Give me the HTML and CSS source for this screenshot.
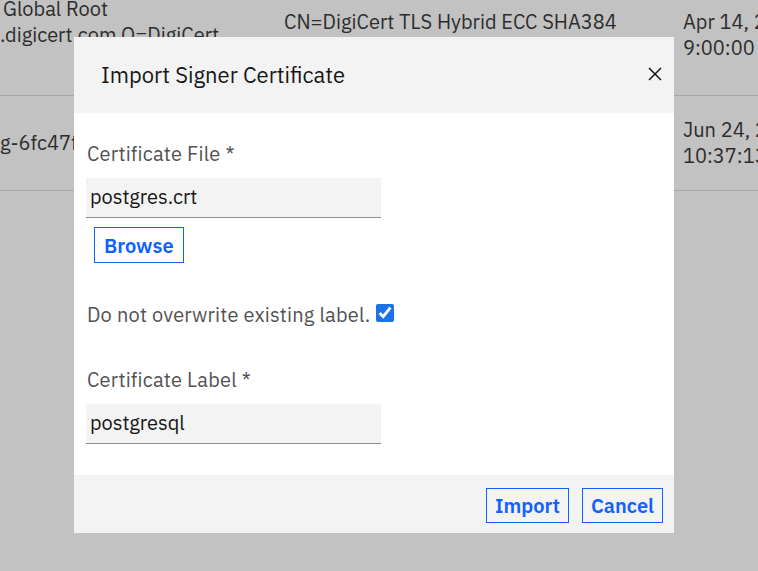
FILE: index.html
```html
<!DOCTYPE html>
<html lang="en">
<head>
<meta charset="utf-8">
<title>Import Signer Certificate</title>
<link rel="stylesheet" href="styles.css">
</head>
<body>
<div class="page">
  <div class="table">
    <div class="row row-tall">
      <div class="cell c1 c1-top"><div>Global Root</div><div class="shift">.digicert.com O=DigiCert</div></div>
      <div class="cell c2"><div>CN=DigiCert TLS Hybrid ECC SHA384</div><div>2020 CA1,O=DigiCert Inc</div></div>
      <div class="cell c3"><div>Apr 14, 2021</div><div>9:00:00 AM</div></div>
    </div>
    <div class="row">
      <div class="cell c1"><div class="shift">g-6fc47f1a2b3c</div></div>
      <div class="cell c2"><div>CN=postgresql</div></div>
      <div class="cell c3"><div>Jun 24, 2024</div><div>10:37:13 AM</div></div>
    </div>
  </div>
</div>

<div class="overlay">
  <div class="modal" role="dialog" aria-labelledby="dlg-title">
    <div class="modal-header">
      <h2 id="dlg-title" class="modal-title">Import Signer Certificate</h2>
      <button class="close-btn" aria-label="Close">
        <svg width="14" height="14" viewBox="0 0 14 14"><path d="M1 1 L13 13 M13 1 L1 13" stroke="#161616" stroke-width="1.5" fill="none"/></svg>
      </button>
    </div>
    <div class="modal-body">
      <label class="field-label" for="cert-file">Certificate File *</label>
      <input class="text-input" id="cert-file" type="text" value="postgres.crt">
      <button class="btn browse">Browse</button>
      <div class="check-row">
        <span>Do not overwrite existing label.</span>
        <input class="check" type="checkbox" checked>
      </div>
      <label class="field-label label-gap" for="cert-label">Certificate Label *</label>
      <input class="text-input" id="cert-label" type="text" value="postgresql">
    </div>
    <div class="modal-footer">
      <button class="btn">Import</button>
      <button class="btn">Cancel</button>
    </div>
  </div>
</div>
</body>
</html>
```

FILE: styles.css
```css
html, body {
  margin: 0;
  padding: 0;
  height: 100%;
  overflow: hidden;
  background: #ffffff;
  font-family: "IBM Plex Sans", "Noto Sans", Roboto, sans-serif;
}

.page {
  color: #3b3b3b;
  font-size: 20px;
  line-height: 26px;
}

.table {
  margin-top: -25px;
}

.row {
  display: grid;
  grid-template-columns: 284px 399px 1fr;
  align-items: center;
  padding: 21px 0;
  border-bottom: 1px solid #d9d9d9;
  white-space: nowrap;
}

.row-tall {
  padding: 34px 0;
}

.cell {
  overflow: hidden;
}

.c1 {
  padding-left: 3px;
}

.c1-top {
  align-self: start;
  margin-top: -13px;
}

.shift {
  margin-left: -3px;
}

.overlay {
  position: fixed;
  inset: 0;
  background: rgba(0, 0, 0, 0.24);
  display: flex;
  align-items: flex-start;
  padding: 37px 0 0 74px;
}

.modal {
  width: 600px;
  height: 496px;
  background: #ffffff;
  display: flex;
  flex-direction: column;
}

.modal-header {
  height: 76px;
  flex: none;
  background: #f3f3f3;
  display: flex;
  align-items: center;
  justify-content: space-between;
  padding: 0 7px 0 27px;
}

.modal-title {
  margin: 0 0 1px;
  font-size: 22px;
  font-weight: 400;
  color: #161616;
}

.close-btn {
  width: 24px;
  height: 24px;
  border: 0;
  padding: 0;
  margin-bottom: 3px;
  background: transparent;
  display: flex;
  align-items: center;
  justify-content: center;
}

.modal-body {
  flex: 1;
  display: flex;
  flex-direction: column;
  align-items: flex-start;
  padding: 29px 13px 0 12px;
}

.field-label {
  display: block;
  font-size: 20px;
  line-height: 24px;
  letter-spacing: 0.2px;
  color: #525252;
  margin-left: 1px;
}

.label-gap {
  margin-top: 41px;
}

.text-input {
  box-sizing: border-box;
  width: 295px;
  height: 40px;
  margin: 12px 0 0;
  padding: 0 4px 2px;
  border: 0;
  border-bottom: 1px solid #8d8d8d;
  background: #f3f3f3;
  font: inherit;
  font-size: 20px;
  color: #161616;
  outline: none;
}

.btn {
  box-sizing: border-box;
  height: 35px;
  padding: 0 8px;
  border: 1px solid #0f62fe;
  background: transparent;
  color: #0f62fe;
  font-family: inherit;
  font-size: 20px;
  font-weight: 600;
}

.browse {
  height: 36px;
  padding: 0 9px;
  margin: 9px 0 0 8px;
  background: #ffffff;
}

.check-row {
  margin-top: 40px;
  margin-left: 1px;
  display: flex;
  align-items: center;
  gap: 6px;
  font-size: 20px;
  line-height: 24px;
  letter-spacing: 0.2px;
  color: #525252;
}

.check {
  width: 18px;
  height: 18px;
  margin: 0 0 5px;
  accent-color: #1a73e8;
}

.modal-footer {
  height: 58px;
  flex: none;
  box-sizing: border-box;
  background: #f3f3f3;
  display: flex;
  justify-content: flex-end;
  align-items: flex-start;
  gap: 13px;
  padding: 13px 11px 0 0;
}
```
